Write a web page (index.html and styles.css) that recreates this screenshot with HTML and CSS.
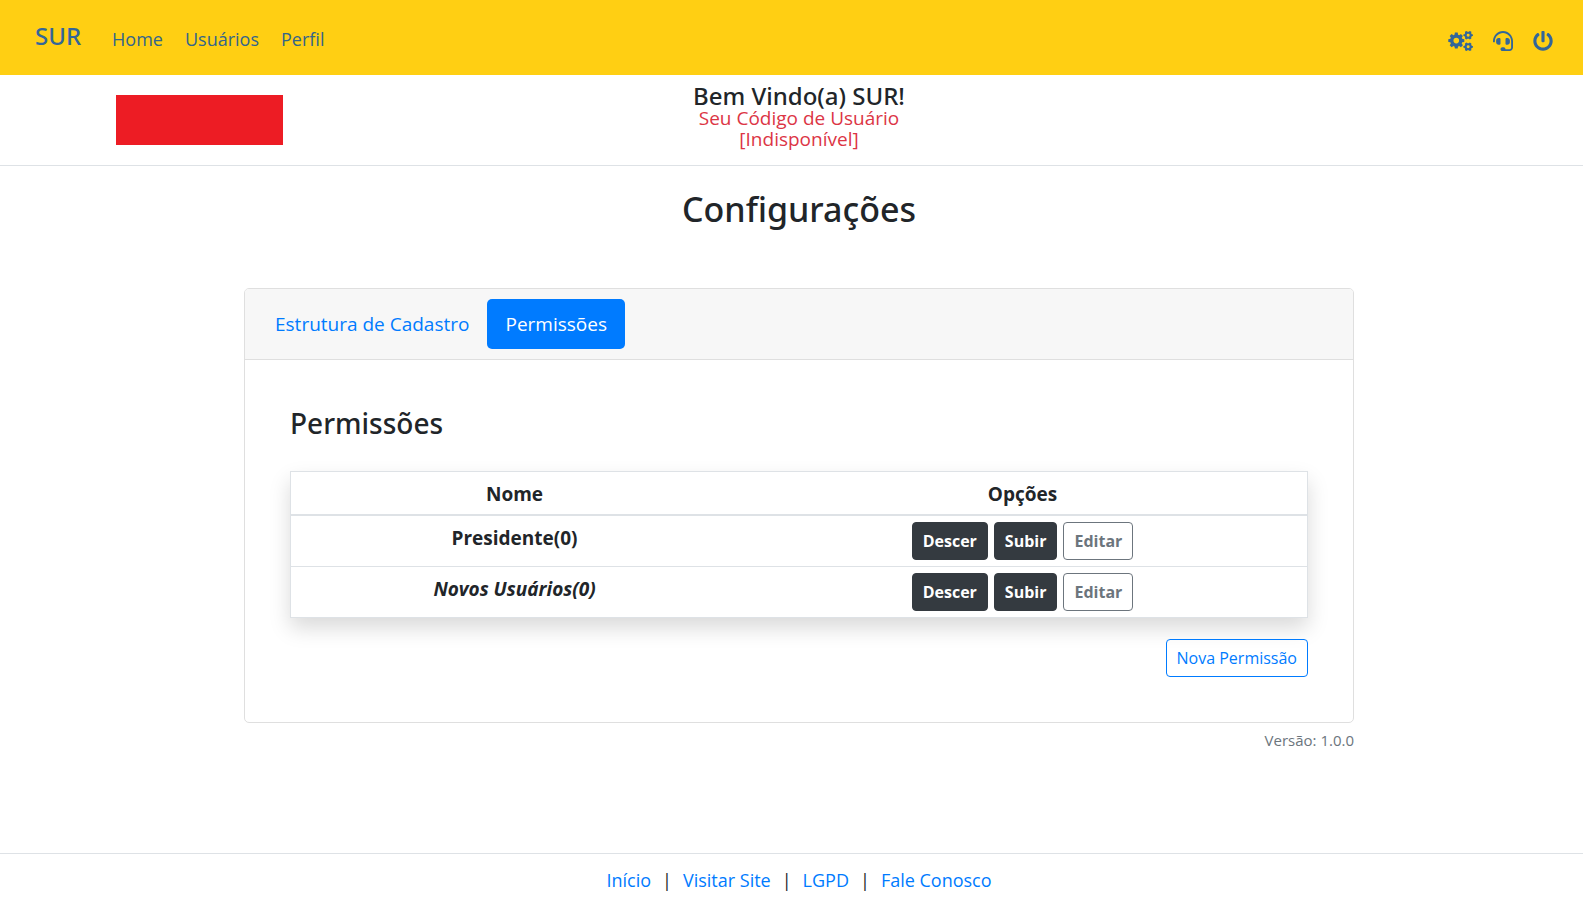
FILE: index.html
```html
<!DOCTYPE html>
<html lang="pt-BR">
<head>
<meta charset="utf-8">
<title>SUR - Configurações</title>
<link rel="stylesheet" href="styles.css">
</head>
<body>
<nav class="navbar">
  <a class="brand" href="#">SUR</a>
  <ul class="menu">
    <li><a href="#">Home</a></li>
    <li><a href="#">Usuários</a></li>
    <li><a href="#">Perfil</a></li>
  </ul>
  <div class="tools">
    <a href="#" aria-label="Configurações"><svg class="icon icon-wide" viewBox="0 0 640 512"><path fill-rule="evenodd" d="M176 40h72l10 54 28 12 45-30 50 50-30 45 12 28 54 10v72l-54 10-12 28 30 45-50 50-45-30-28 12-10 54h-72l-10-54-28-12-45 30-50-50 30-45-12-28-54-10v-72l54-10 12-28-30-45 50-50 45 30 28-12zM212 173a72 72 0 1 0 0 144 72 72 0 0 0 0-144zM474 0l26 18h32l26-18 40 22-4 34 14 24 32 12v32l-32 12-14 24 4 34-40 22-26-20h-32l-26 20-40-22 4-34-14-24-32-12V92l32-12 14-24-4-34zM516 70a38 38 0 1 0 0 76 38 38 0 0 0 0-76zM474 296l26 18h32l26-18 40 22-4 34 14 24 32 12v32l-32 12-14 24 4 34-40 22-26-20h-32l-26 20-40-22 4-34-14-24-32-12v-32l32-12 14-24-4-34zM516 366a38 38 0 1 0 0 76 38 38 0 0 0 0-76z"/></svg></a>
    <a href="#" aria-label="Suporte"><svg class="icon" viewBox="0 0 512 512"><path d="M192 208c0-17.67-14.33-32-32-32h-16c-35.35 0-64 28.65-64 64v48c0 35.35 28.65 64 64 64h16c17.67 0 32-14.33 32-32V208zm176 144c35.35 0 64-28.65 64-64v-48c0-35.35-28.65-64-64-64h-16c-17.67 0-32 14.33-32 32v112c0 17.67 14.33 32 32 32h16zM256 0C113.18 0 4.58 118.83 0 256v16c0 8.84 7.16 16 16 16h16c8.84 0 16-7.16 16-16v-16c0-114.69 93.31-208 208-208s208 93.31 208 208h-.12c.08 2.43.12 165.72.12 165.72 0 23.35-18.93 42.28-42.28 42.28H320c0-26.51-21.49-48-48-48h-32c-26.51 0-48 21.49-48 48s21.49 48 48 48h181.72c49.86 0 90.28-40.42 90.28-90.28V256C507.42 118.83 398.82 0 256 0z"/></svg></a>
    <a href="#" aria-label="Sair"><svg class="icon" viewBox="0 0 512 512"><path d="M400 54.1c63 45 104 118.6 104 201.9 0 136.8-110.8 247.7-247.5 248C120 504.3 8.2 393 8 256.4 7.9 173.1 48.9 99.3 111.8 54.2c11.7-8.3 28-4.8 35 7.7L162.6 90c5.9 10.5 3.1 23.8-6.6 31-41.5 30.8-68 79.6-68 134.9-.1 92.3 74.5 168.1 168 168.1 91.6 0 168.6-74.2 168-169.1-.3-51.8-24.7-101.8-68.1-134-9.7-7.2-12.4-20.5-6.5-30.9l15.8-28.1c7-12.4 23.2-16.1 34.8-7.8zM296 264V24c0-13.3-10.7-24-24-24h-32c-13.3 0-24 10.7-24 24v240c0 13.3 10.7 24 24 24h32c13.3 0 24-10.7 24-24z"/></svg></a>
  </div>
</nav>
<header class="welcome">
  <div class="logo"></div>
  <div class="greeting">
    <h1 class="greeting-name">Bem Vindo(a) SUR!</h1>
    <p class="greeting-code">Seu Código de Usuário<br>[Indisponível]</p>
  </div>
</header>
<main class="content">
  <h2 class="page-title">Configurações</h2>
  <section class="card">
    <div class="card-header">
      <a class="tab" href="#">Estrutura de Cadastro</a>
      <a class="tab tab-active" href="#" aria-current="page">Permissões</a>
    </div>
    <div class="card-body">
      <h3 class="card-title">Permissões</h3>
      <table class="table">
        <thead>
          <tr><th class="col-name" scope="col">Nome</th><th scope="col">Opções</th></tr>
        </thead>
        <tbody>
          <tr>
            <th scope="row">Presidente(0)</th>
            <td><div class="actions"><button class="btn btn-dark">Descer</button><button class="btn btn-dark">Subir</button><button class="btn btn-outline">Editar</button></div></td>
          </tr>
          <tr>
            <th scope="row"><em>Novos Usuários(0)</em></th>
            <td><div class="actions"><button class="btn btn-dark">Descer</button><button class="btn btn-dark">Subir</button><button class="btn btn-outline">Editar</button></div></td>
          </tr>
        </tbody>
      </table>
      <div class="card-actions"><button class="btn btn-primary">Nova Permissão</button></div>
    </div>
  </section>
  <p class="version">Versão: 1.0.0</p>
</main>
<footer class="footer">
  <a href="#">Início</a><span>|</span><a href="#">Visitar Site</a><span>|</span><a href="#">LGPD</a><span>|</span><a href="#">Fale Conosco</a>
</footer>
</body>
</html>
```

FILE: styles.css
```css
* { box-sizing: border-box; }
body {
  margin: 0;
  min-height: 100vh;
  display: flex;
  flex-direction: column;
  overflow-x: hidden;
  background: #fff;
  color: #212529;
  font-family: "Open Sans", "Noto Sans", sans-serif;
  font-size: 18px;
  line-height: 30px;
}
h1, h2, h3, p { margin: 0; }
h1, h2, h3, .brand { font-family: "Noto Sans", "Open Sans", sans-serif; font-weight: 500; }
a { color: #007bff; text-decoration: none; }

.navbar {
  display: flex;
  align-items: center;
  height: 75px;
  padding: 0 30px 0 35px;
  background: #ffcf13;
}
.navbar a { color: #33658a; }
.navbar .brand { color: #336699; font-size: 24px; padding-bottom: 4px; }
.menu { display: flex; gap: 22px; margin: 0 0 0 31px; padding: 2px 0 0; list-style: none; }
.tools { display: flex; gap: 20px; margin-left: auto; padding-top: 7px; }
.tools a { display: flex; }
.icon { width: 20px; height: 20px; fill: #336699; }
.icon-wide { width: 25px; }

.welcome {
  display: grid;
  grid-template-columns: 1fr auto 1fr;
  align-items: start;
  padding: 9px 0 15px 15px;
  border-bottom: 1px solid #dee2e6;
}
.logo { width: 167px; height: 50px; margin: 11px 0 0 101px; background: #ed1c24; }
.greeting { text-align: center; }
.greeting-name { font-size: 24px; line-height: 24px; }
.greeting-code { color: #dc3545; font-size: 19px; line-height: 21px; }

.content { width: 100%; max-width: 1125px; margin: 0 auto; padding: 20px 0 0 15px; }
.page-title { font-size: 34px; line-height: 46px; text-align: center; margin-bottom: 56px; }
.card { border: 1px solid #dfdfdf; border-radius: 5px; }
.card-header {
  display: flex;
  padding: 10px 12px;
  background: #f7f7f7;
  border-bottom: 1px solid #dfdfdf;
  border-radius: 4px 4px 0 0;
}
.tab { padding: 10px 18px; border-radius: 5px; font-size: 19px; }
.tab-active { background: #007bff; color: #fff; }
.card-body { padding: 45px; }
.card-title { font-size: 28px; line-height: 36px; margin-bottom: 30px; }

.table {
  width: 100%;
  table-layout: fixed;
  border-collapse: collapse;
  border: 1px solid #dee2e6;
  text-align: center;
  font-size: 19px;
  box-shadow: 0 10px 20px rgba(0, 0, 0, .15);
}
.table th, .table td { padding: 6px; vertical-align: top; border-top: 1px solid #dee2e6; font-weight: 700; }
.table th { padding: 7px 6px 5px; }
.table thead th { border-bottom: 2px solid #dee2e6; }
.table .col-name { width: 44%; }
.actions { display: flex; justify-content: center; gap: 6px; }
.btn {
  padding: 5px 10px;
  border: 1px solid;
  border-radius: 4px;
  background: transparent;
  font: inherit;
  font-size: 16px;
  line-height: 26px;
}
.btn-dark { background: #343a40; border-color: #343a40; color: #fff; }
.btn-outline { color: #6c757d; }
.btn-primary { color: #007bff; }
.card-actions { display: flex; justify-content: flex-end; margin-top: 21px; }
.version { margin-top: 5px; text-align: right; color: #6c757d; font-size: 15px; line-height: 24px; }

.footer {
  display: flex;
  justify-content: center;
  gap: 11px;
  margin-top: auto;
  padding: 11px 0 19px 15px;
  border-top: 1px solid #dee2e6;
}
```
